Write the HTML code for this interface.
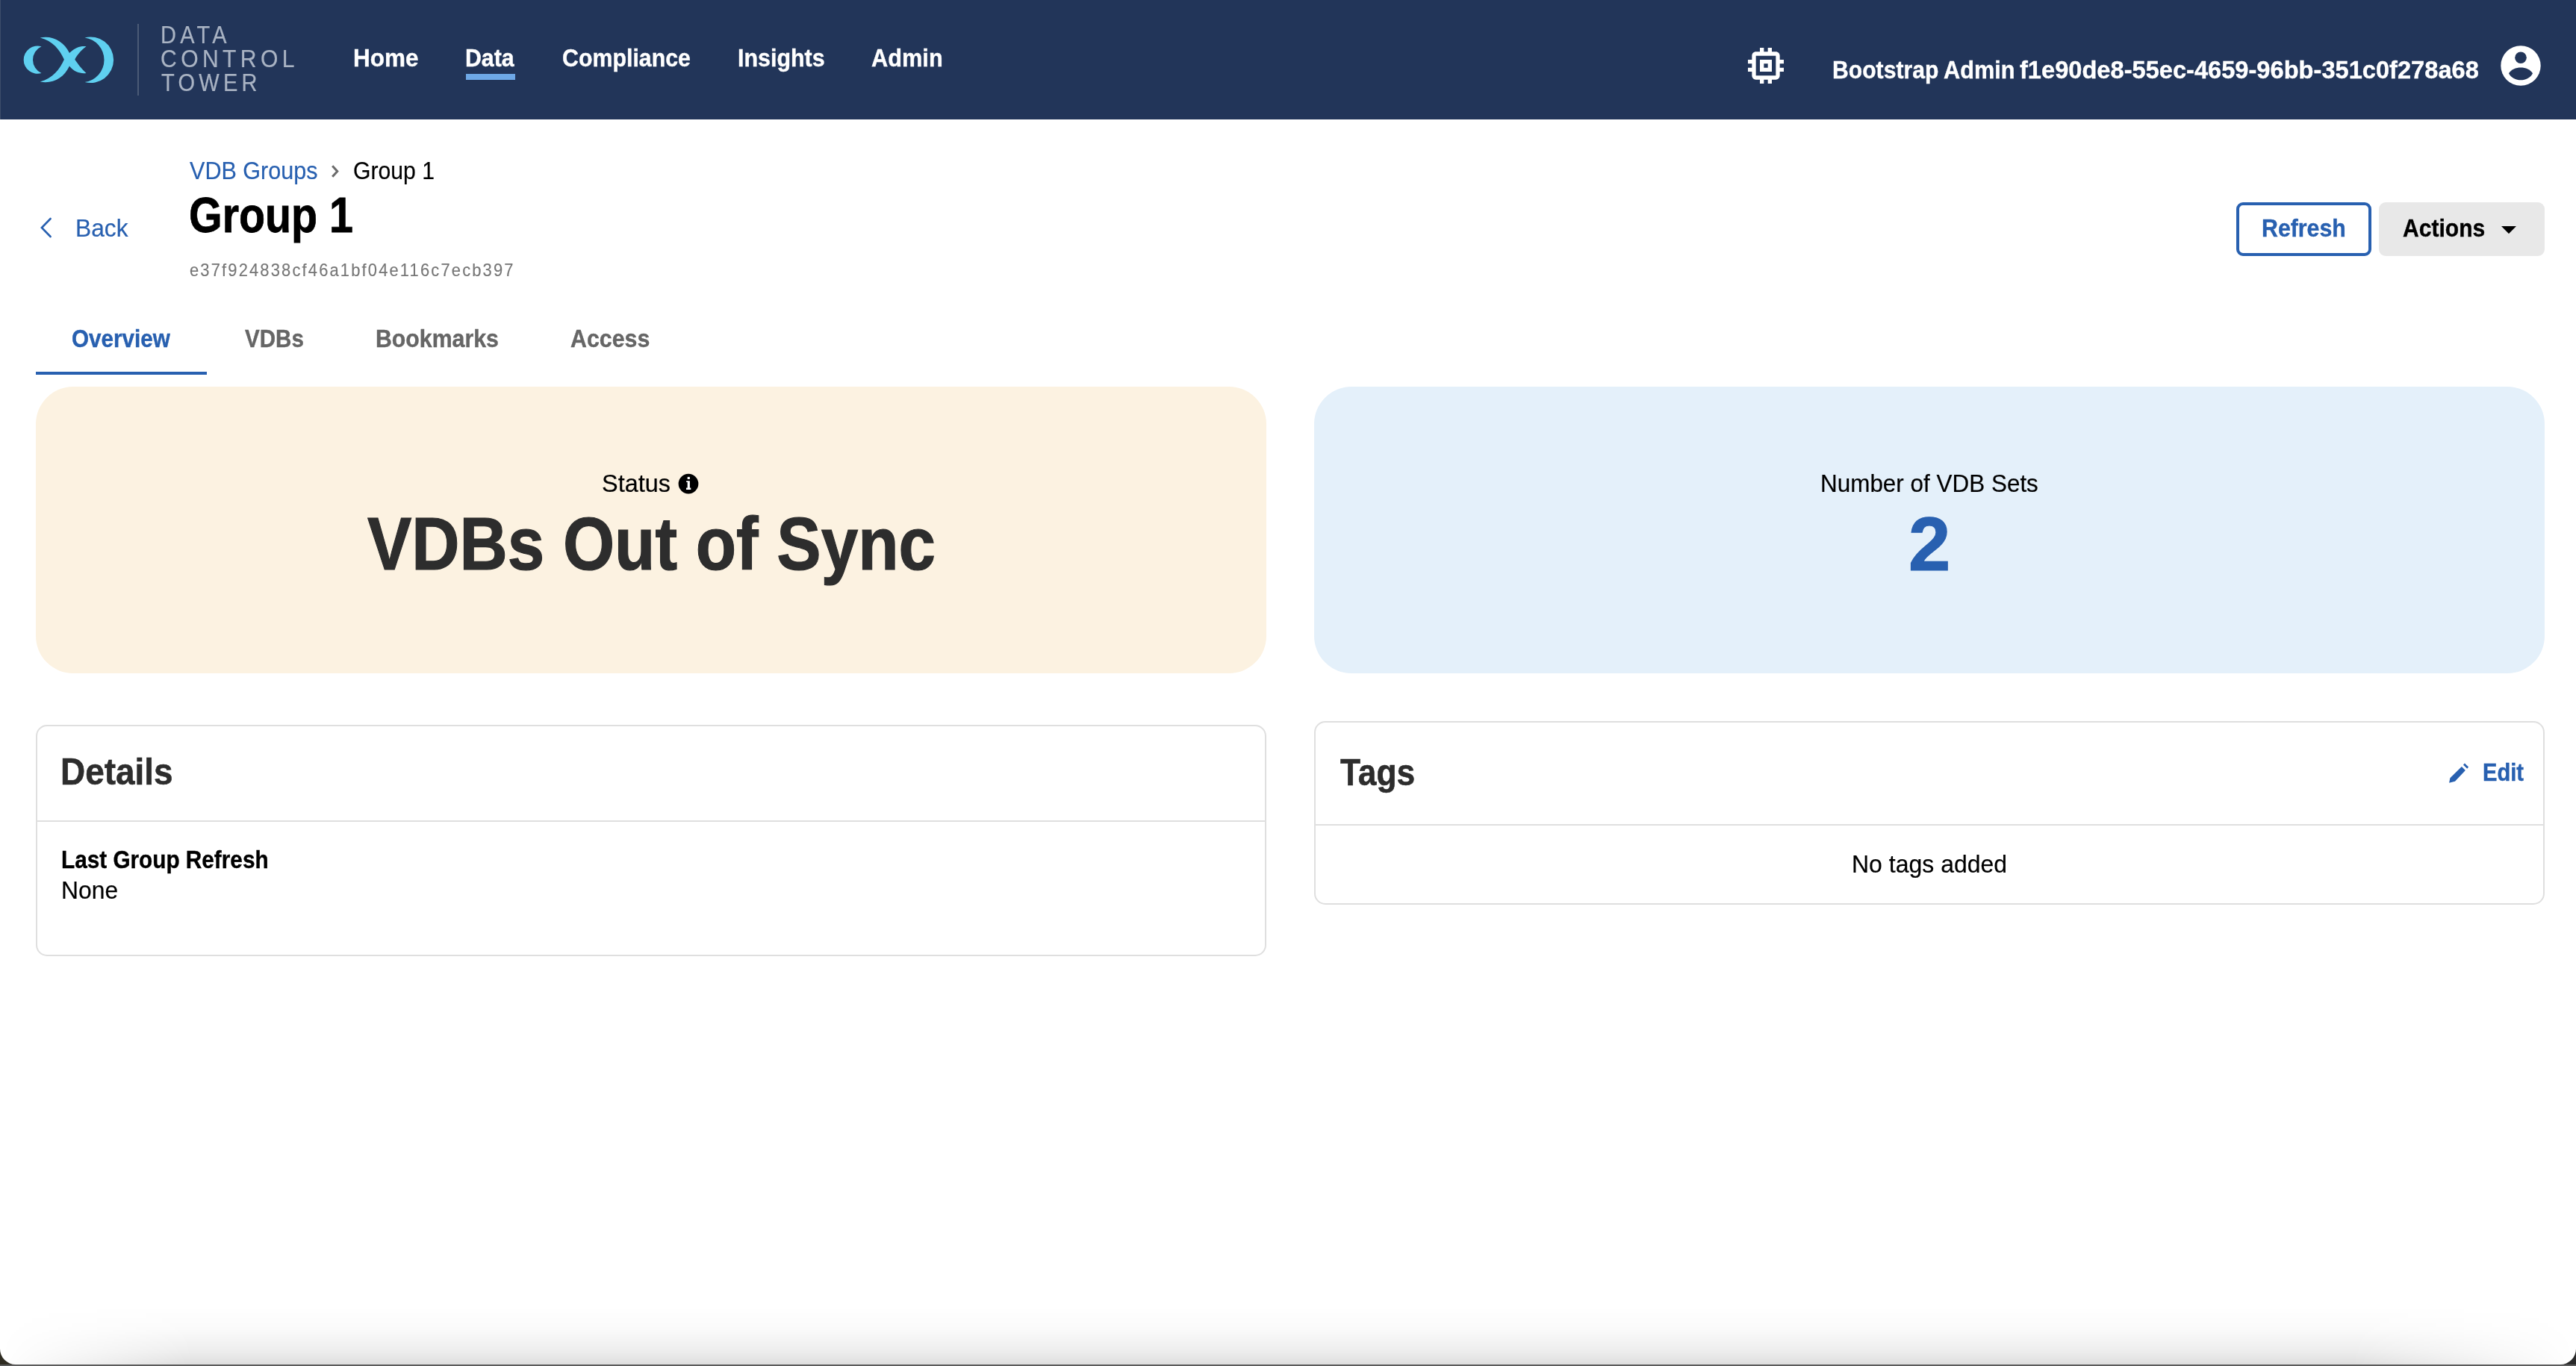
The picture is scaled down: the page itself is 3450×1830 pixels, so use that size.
<!DOCTYPE html>
<html><head><meta charset="utf-8"><style>
html,body{margin:0;padding:0;width:3450px;height:1830px;overflow:hidden;background:#fff;}
body{position:relative;font-family:"Liberation Sans",sans-serif;}
.t{position:absolute;white-space:nowrap;transform-origin:0 0;}
</style></head><body>
<div style="position:absolute;left:0;top:0;width:3450px;height:160px;background:#223559"></div>
<div style="position:absolute;left:0;top:0;width:1px;height:160px;background:#3d4d6a"></div>
<svg style="position:absolute;left:0;top:0" width="200" height="160" viewBox="0 0 200 160">
<g fill="#5fd0f0">
<path d="M55.5,62.3 A18.6,18.6 0 1 0 55.5,98 A19.6,19.6 0 0 1 55.5,62.3Z"/>
<path d="M53.7,50.5 C70.5,47.2 85.5,55.5 93.0,71.0 C101.2,63.4 108.2,61.4 115.5,62.3 C108.2,67.5 102.3,75.1 100.3,79.8 C103.5,84.5 109.4,92.7 115.5,98.0 C108.2,98.9 99.4,96.8 93.0,88.6 C85.5,104.6 70.5,112.8 53.7,109.6 C70.7,105.0 80.1,92.7 85.9,79.8 C80.1,66.9 70.7,54.6 53.7,50.5Z"/>
<path d="M113.5,50.5 A30.77,30.77 0 1 1 113.5,110 A30.02,30.02 0 0 0 113.5,50.5Z"/>
</g>
<rect x="184" y="32" width="2" height="96" fill="#4b5a76"/>
</svg>
<div class="t" style="left:214.62px;top:29.69px;font-size:33.43px;line-height:33.43px;font-weight:400;color:#a9b3c3;transform:scaleX(0.8673);letter-spacing:6.00px;-webkit-text-stroke:0.20px #a9b3c3;">DATA</div>
<div class="t" style="left:215.47px;top:62.19px;font-size:33.43px;line-height:33.43px;font-weight:400;color:#a9b3c3;transform:scaleX(0.9001);letter-spacing:6.00px;-webkit-text-stroke:0.20px #a9b3c3;">CONTROL</div>
<div class="t" style="left:216.35px;top:93.69px;font-size:33.43px;line-height:33.43px;font-weight:400;color:#a9b3c3;transform:scaleX(0.8692);letter-spacing:6.00px;-webkit-text-stroke:0.20px #a9b3c3;">TOWER</div>
<div class="t" style="left:472.89px;top:61.45px;font-size:33.72px;line-height:33.72px;font-weight:700;color:#fff;transform:scaleX(0.9338);-webkit-text-stroke:0.40px #fff;">Home</div>
<div class="t" style="left:622.97px;top:60.75px;font-size:33.72px;line-height:33.72px;font-weight:700;color:#fff;transform:scaleX(0.8980);-webkit-text-stroke:0.40px #fff;">Data</div>
<div style="position:absolute;left:624px;top:99px;width:66px;height:8px;background:#6ea8e6"></div>
<div class="t" style="left:753.06px;top:61.15px;font-size:33.72px;line-height:33.72px;font-weight:700;color:#fff;transform:scaleX(0.8998);-webkit-text-stroke:0.40px #fff;">Compliance</div>
<div class="t" style="left:987.86px;top:61.15px;font-size:33.72px;line-height:33.72px;font-weight:700;color:#fff;transform:scaleX(0.9026);-webkit-text-stroke:0.40px #fff;">Insights</div>
<div class="t" style="left:1167.23px;top:61.15px;font-size:33.72px;line-height:33.72px;font-weight:700;color:#fff;transform:scaleX(0.9120);-webkit-text-stroke:0.40px #fff;">Admin</div>
<svg style="position:absolute;left:2332.8px;top:55.8px" width="64" height="64" viewBox="0 0 24 24"><path fill="#fff" d="M15 9H9v6h6V9zm-2 4h-2v-2h2v2zm8-2V9h-2V7c0-1.1-.9-2-2-2h-2V3h-2v2h-2V3H9v2H7c-1.1 0-2 .9-2 2v2H3v2h2v2H3v2h2v2c0 1.1.9 2 2 2h2v2h2v-2h2v2h2v-2h2c1.1 0 2-.9 2-2v-2h2v-2h-2v-2h2zm-4 6H7V7h10v10z"/></svg>
<div class="t" style="left:2453.58px;top:76.94px;font-size:33.14px;line-height:33.14px;font-weight:700;color:#fff;transform:scaleX(0.9103);-webkit-text-stroke:0.40px #fff;">Bootstrap</div>
<div class="t" style="left:2602.73px;top:76.94px;font-size:33.14px;line-height:33.14px;font-weight:700;color:#fff;transform:scaleX(0.9270);-webkit-text-stroke:0.40px #fff;">Admin</div>
<div class="t" style="left:2704.94px;top:76.94px;font-size:33.14px;line-height:33.14px;font-weight:700;color:#fff;transform:scaleX(0.9848);-webkit-text-stroke:0.40px #fff;">f1e90de8-55ec-4659-96bb-351c0f278a68</div>
<svg style="position:absolute;left:3340px;top:50px" width="80" height="80" viewBox="3340 50 80 80">
<circle cx="3376" cy="88" r="26.7" fill="#fff"/>
<circle cx="3376" cy="77.2" r="7.8" fill="#223559"/>
<path d="M3360,98.2 C3366,87.8 3386,87.8 3392,98.2 C3386,110.4 3366,110.4 3360,98.2Z" fill="#223559"/>
</svg>
<div class="t" style="left:253.87px;top:211.59px;font-size:33.43px;line-height:33.43px;font-weight:400;color:#2860b0;transform:scaleX(0.9141);-webkit-text-stroke:0.20px #2860b0;">VDB Groups</div>
<svg style="position:absolute;left:440px;top:218px" width="20" height="24" viewBox="0 0 20 24"><path d="M5.2 4.2 L11.8 11.6 L5.2 18.8" fill="none" stroke="#6b6b6b" stroke-width="3"/></svg>
<div class="t" style="left:472.98px;top:211.59px;font-size:33.43px;line-height:33.43px;font-weight:400;color:#000;transform:scaleX(0.9023);-webkit-text-stroke:0.20px #000;">Group 1</div>
<div class="t" style="left:252.55px;top:254.68px;font-size:66.28px;line-height:66.28px;font-weight:700;color:#000;transform:scaleX(0.8661);-webkit-text-stroke:0.80px #000;">Group 1</div>
<div class="t" style="left:253.57px;top:350.38px;font-size:24.36px;line-height:24.36px;font-weight:400;color:#767676;transform:scaleX(0.9000);letter-spacing:2.40px;-webkit-text-stroke:0.15px #767676;">e37f924838cf46a1bf04e116c7ecb397</div>
<svg style="position:absolute;left:46px;top:286px" width="32" height="40" viewBox="0 0 32 40"><path d="M21.6,7 L9.9,19 L21.6,31" fill="none" stroke="#2860b0" stroke-width="2.6" stroke-linecap="round"/></svg>
<div class="t" style="left:100.80px;top:288.69px;font-size:33.43px;line-height:33.43px;font-weight:400;color:#2860b0;transform:scaleX(0.9494);-webkit-text-stroke:0.20px #2860b0;">Back</div>
<div style="position:absolute;left:2995px;top:271px;width:181px;height:72px;box-sizing:border-box;border:4px solid #2860b0;border-radius:9px;background:#fff"></div>
<div class="t" style="left:3028.97px;top:288.77px;font-size:33.58px;line-height:33.58px;font-weight:700;color:#2860b0;transform:scaleX(0.9023);-webkit-text-stroke:0.40px #2860b0;">Refresh</div>
<div style="position:absolute;left:3186px;top:271px;width:222px;height:72px;border-radius:9px;background:#e8e8e8"></div>
<div class="t" style="left:3217.65px;top:288.77px;font-size:33.58px;line-height:33.58px;font-weight:700;color:#000;transform:scaleX(0.8957);-webkit-text-stroke:0.40px #000;">Actions</div>
<svg style="position:absolute;left:3350px;top:302.7px" width="20" height="10.2" viewBox="0 0 20 10"><path d="M0 0H20L10 10Z" fill="#000"/></svg>
<div class="t" style="left:95.78px;top:436.69px;font-size:33.43px;line-height:33.43px;font-weight:700;color:#2860b0;transform:scaleX(0.8876);-webkit-text-stroke:0.40px #2860b0;">Overview</div>
<div class="t" style="left:327.70px;top:436.69px;font-size:33.43px;line-height:33.43px;font-weight:700;color:#666;transform:scaleX(0.8850);-webkit-text-stroke:0.40px #666;">VDBs</div>
<div class="t" style="left:503.37px;top:436.69px;font-size:33.43px;line-height:33.43px;font-weight:700;color:#666;transform:scaleX(0.9060);-webkit-text-stroke:0.40px #666;">Bookmarks</div>
<div class="t" style="left:763.54px;top:436.69px;font-size:33.43px;line-height:33.43px;font-weight:700;color:#666;transform:scaleX(0.9077);-webkit-text-stroke:0.40px #666;">Access</div>
<div style="position:absolute;left:48px;top:497.5px;width:229px;height:4.5px;background:#2860b0"></div>
<div style="position:absolute;left:48px;top:518px;width:1648px;height:384px;border-radius:50px;background:#fcf2e1"></div>
<div class="t" style="left:805.63px;top:630.59px;font-size:33.43px;line-height:33.43px;font-weight:400;color:#000;transform:scaleX(0.9702);-webkit-text-stroke:0.20px #000;">Status</div>
<svg style="position:absolute;left:908px;top:634px" width="28" height="28" viewBox="908 634 28 28">
<circle cx="922" cy="648.1" r="13.35" fill="#000"/>
<rect x="920.7" y="638.9" width="3.2" height="3.1" fill="#fff"/>
<path d="M919.2,644.2 H923.9 V653.5 H925.3 V656.1 H919 V653.5 H920.7 V646 H919.2Z" fill="#fff"/>
</svg>
<div class="t" style="left:491.89px;top:678.60px;font-size:99.56px;line-height:99.56px;font-weight:700;color:#2d2d2d;transform:scaleX(0.8933);-webkit-text-stroke:1.19px #2d2d2d;">VDBs Out of Sync</div>
<div style="position:absolute;left:1760px;top:518px;width:1648px;height:384px;border-radius:50px;background:#e4f0fa"></div>
<div class="t" style="left:2437.62px;top:630.79px;font-size:33.43px;line-height:33.43px;font-weight:400;color:#000;transform:scaleX(0.9408);-webkit-text-stroke:0.20px #000;">Number of VDB Sets</div>
<div class="t" style="left:2555.89px;top:677.76px;font-size:101.15px;line-height:101.15px;font-weight:700;color:#2860b0;transform:scaleX(1.0001);-webkit-text-stroke:1.21px #2860b0;">2</div>
<div style="position:absolute;left:48px;top:971px;width:1648px;height:310px;box-sizing:border-box;border:2px solid #dfdfdf;border-radius:15px;background:#fff"></div>
<div style="position:absolute;left:50px;top:1098.5px;width:1644px;height:2px;background:#dfdfdf"></div>
<div class="t" style="left:81.43px;top:1009.25px;font-size:50.73px;line-height:50.73px;font-weight:700;color:#2d2d2d;transform:scaleX(0.9057);-webkit-text-stroke:0.61px #2d2d2d;">Details</div>
<div class="t" style="left:82.21px;top:1135.49px;font-size:33.43px;line-height:33.43px;font-weight:700;color:#000;transform:scaleX(0.8897);-webkit-text-stroke:0.40px #000;">Last Group Refresh</div>
<div class="t" style="left:81.89px;top:1176.49px;font-size:33.43px;line-height:33.43px;font-weight:400;color:#000;transform:scaleX(0.9526);-webkit-text-stroke:0.20px #000;">None</div>
<div style="position:absolute;left:1760px;top:966px;width:1648px;height:246px;box-sizing:border-box;border:2px solid #dfdfdf;border-radius:15px;background:#fff"></div>
<div style="position:absolute;left:1762px;top:1104px;width:1644px;height:2px;background:#dfdfdf"></div>
<div class="t" style="left:1794.50px;top:1009.74px;font-size:50.15px;line-height:50.15px;font-weight:700;color:#2d2d2d;transform:scaleX(0.8845);-webkit-text-stroke:0.60px #2d2d2d;">Tags</div>
<svg style="position:absolute;left:3270px;top:1015px" width="45" height="40" viewBox="3270 1015 45 40"><path fill="#2860b0" d="M3280.1,1048.8 L3281.4,1042.3 L3296.9,1026.9 L3301.9,1031.9 L3288,1046.7Z M3300.9,1022.6 L3306.1,1027.6 L3304.2,1029.7 L3299.0,1024.7Z"/></svg>
<div class="t" style="left:3325.25px;top:1017.69px;font-size:33.43px;line-height:33.43px;font-weight:700;color:#2860b0;transform:scaleX(0.8712);-webkit-text-stroke:0.40px #2860b0;">Edit</div>
<div class="t" style="left:2479.77px;top:1140.89px;font-size:33.43px;line-height:33.43px;font-weight:400;color:#000;transform:scaleX(0.9574);-webkit-text-stroke:0.20px #000;">No tags added</div>
<div style="position:absolute;left:0;top:1750px;width:3450px;height:78px;background:linear-gradient(to bottom, rgba(0,0,0,0) 0%, rgba(0,0,0,0.02) 40%, rgba(0,0,0,0.065) 75%, rgba(0,0,0,0.13) 100%);-webkit-mask-image:linear-gradient(to right, transparent 0, #000 260px, #000 3150px, transparent 100%)"></div>
<div style="position:absolute;left:0;top:1828px;width:3450px;height:2px;background:#5c5c5c"></div>
<svg style="position:absolute;left:0;top:1800px" width="30" height="30" viewBox="0 0 30 30"><path d="M0,0 V28 H21 A21,21 0 0 1 0,7 Z" fill="#2f2c22"/></svg>
<svg style="position:absolute;left:3420px;top:1800px" width="30" height="30" viewBox="0 0 30 30"><path d="M30,0 V28 H9 A21,21 0 0 0 30,7 Z" fill="#2a2a2a"/></svg>
</body></html>
